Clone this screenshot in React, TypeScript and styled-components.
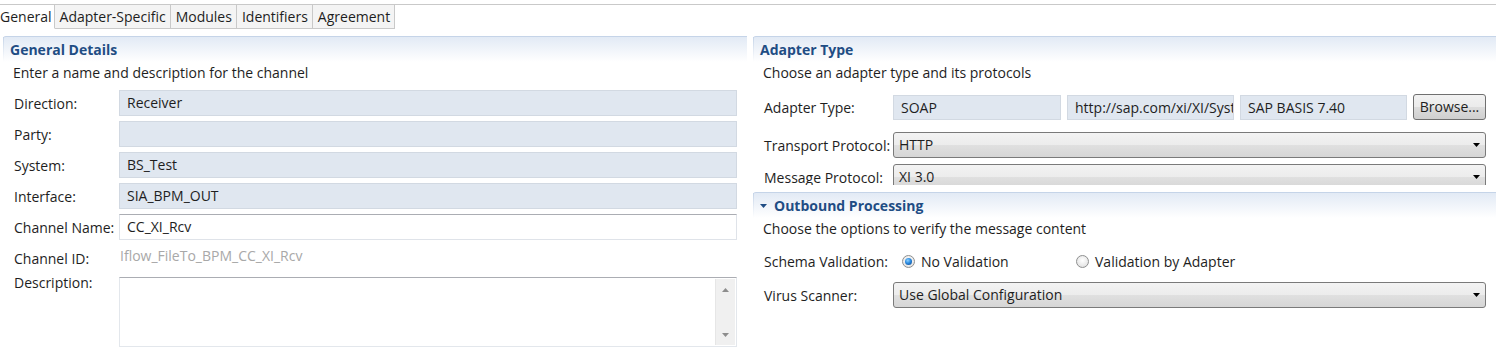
import styled, { createGlobalStyle } from "styled-components"

const GlobalStyle = createGlobalStyle`
  html, body {
    margin: 0;
    padding: 0;
    background: #fff;
  }
  body {
    font-family: "Open Sans", "Noto Sans", sans-serif;
    font-size: 14px;
    color: #1e1e1e;
    overflow: hidden;
  }
`

const Page = styled.div`
  width: 1496px;
  height: 358px;
  overflow: hidden;
`

const TabBar = styled.div`
  display: flex;
  margin-top: 4px;
  border-top: 1px solid #c9c9c9;
  height: 24px;
`

const Tab = styled.div<{ $active?: boolean }>`
  padding: 0 4px 0 5px;
  line-height: 23px;
  border-right: 1px solid #c9c9c9;
  border-bottom: 1px solid ${(p) => (p.$active ? "transparent" : "#c9c9c9")};
  background: ${(p) => (p.$active ? "#fff" : "#f4f4f4")};
  white-space: nowrap;

  &:first-child {
    padding: 0 2px 0 0;
  }
`

const TabFiller = styled.div`
  flex: 1;
`

const Columns = styled.div`
  display: flex;
  gap: 6px;
  padding: 7px 0 0 3px;
`

const Column = styled.div<{ $width: number }>`
  width: ${(p) => p.$width}px;
  flex-shrink: 0;
  display: flex;
  flex-direction: column;
  gap: 7px;
`

const Section = styled.section<{ $height?: number }>`
  display: flex;
  flex-direction: column;
  ${(p) => (p.$height ? `height: ${p.$height}px; overflow: hidden; flex-shrink: 0;` : "")}

  & > * {
    flex-shrink: 0;
  }
`

const SectionHeader = styled.div`
  position: relative;
  height: 25px;
  border-top: 1px solid #c5d4e8;
  border-top-left-radius: 3px;
  background: linear-gradient(#e2eaf5, #ffffff);
  padding-left: 7px;
  display: flex;
  align-items: center;
  gap: 7px;
  font-weight: 700;
  color: #1f4d84;

  &::before {
    content: "";
    position: absolute;
    left: 0;
    top: 0;
    bottom: 0;
    width: 1px;
    background: linear-gradient(#c5d4e8, #ffffff);
  }
`

const Caret = styled.svg`
  width: 7px;
  height: 4px;
  fill: #1f4d84;
`

const Hint = styled.div`
  margin-top: 2px;
  padding-left: 10px;
  line-height: 18px;
`

const FieldRow = styled.div<{ $label: number; $mt: number }>`
  display: grid;
  grid-template-columns: ${(p) => p.$label}px 1fr;
  align-items: center;
  margin-top: ${(p) => p.$mt}px;
  padding: 0 10px 0 11px;
`

const Label = styled.div<{ $top?: boolean }>`
  white-space: nowrap;
  ${(p) => (p.$top ? "align-self: start; margin-top: -3px; line-height: 18px;" : "")}
`

const ReadField = styled.div`
  box-sizing: border-box;
  height: 26px;
  padding: 0 7px;
  line-height: 24px;
  background: #e0e7f0;
  border: 1px solid #d2d9e2;
  white-space: nowrap;
  overflow: hidden;
`

const SmallField = styled(ReadField)`
  height: 25px;
  line-height: 23px;
`

const TextBox = styled.div`
  box-sizing: border-box;
  height: 26px;
  padding: 0 7px;
  line-height: 24px;
  background: #fff;
  border: 1px solid #dfe3e9;
  border-top-color: #abadb3;
`

const PlainValue = styled.div`
  padding-left: 1px;
  line-height: 22px;
  padding-bottom: 5px;
  color: #a8a8a8;
`

const TextArea = styled.div`
  box-sizing: border-box;
  height: 70px;
  background: #fff;
  border: 1px solid #e3e7ec;
  border-top-color: #abadb3;
  display: flex;
  justify-content: flex-end;
  padding: 1px;
`

const ScrollTrack = styled.div`
  width: 19px;
  background: #f0f0f0;
  border-left: 1px solid #e6e6e6;
  display: flex;
  flex-direction: column;
  justify-content: space-between;
  align-items: center;
  padding: 9px 0 8px;
`

const ScrollArrow = styled.svg`
  width: 7px;
  height: 4px;
  fill: #8d8d8d;
`

const AdapterFields = styled.div`
  display: grid;
  grid-template-columns: 168px 167px 167px 73px;
  column-gap: 6px;
  align-items: center;
`

const Button = styled.div`
  box-sizing: border-box;
  height: 26px;
  border: 1px solid #707070;
  border-radius: 3px;
  background: linear-gradient(#f2f2f2 0%, #ebebeb 50%, #dddddd 50%, #cfcfcf 100%);
  text-align: center;
  line-height: 24px;
`

const Select = styled.div`
  box-sizing: border-box;
  height: 26px;
  border: 1px solid #7a7a7a;
  border-radius: 3px;
  background: linear-gradient(#f3f3f3 0%, #ececec 50%, #e0e0e0 50%, #d6d6d6 100%);
  display: flex;
  align-items: center;
  justify-content: space-between;
  padding: 0 5px 0 5px;
  line-height: 24px;
`

const SelectArrow = styled.svg`
  width: 7px;
  height: 4px;
  fill: #000;
`

const RadioGroup = styled.div`
  display: flex;
  align-items: center;
  height: 22px;
  padding-left: 9px;
`

const RadioOption = styled.div<{ $width?: number }>`
  display: flex;
  align-items: center;
  gap: 6px;
  ${(p) => (p.$width ? `width: ${p.$width}px;` : "")}
`

const RadioDot = styled.span<{ $checked?: boolean }>`
  box-sizing: border-box;
  width: 13px;
  height: 13px;
  border-radius: 50%;
  border: 1px solid #8e8f8f;
  background: radial-gradient(circle at 50% 40%, #ffffff 0%, #e6e6e6 70%, #d0d0d0 100%);
  display: flex;
  align-items: center;
  justify-content: center;

  &::after {
    content: "";
    display: ${(p) => (p.$checked ? "block" : "none")};
    width: 7px;
    height: 7px;
    border-radius: 50%;
    background: radial-gradient(circle at 40% 35%, #8fd2ff 0%, #2a8ae0 45%, #0b3f82 100%);
  }
`

const Arrow = ({ up }: { up?: boolean }) => (
  <ScrollArrow viewBox="0 0 7 4">
    <polygon points={up ? "3.5,0 7,4 0,4" : "0,0 7,0 3.5,4"} />
  </ScrollArrow>
)

const Dropdown = ({ value }: { value: string }) => (
  <Select>
    <span>{value}</span>
    <SelectArrow viewBox="0 0 7 4">
      <polygon points="0,0 7,0 3.5,4" />
    </SelectArrow>
  </Select>
)

const tabs = ["General", "Adapter-Specific", "Modules", "Identifiers", "Agreement"]

const readRows = [
  { label: "Direction:", value: "Receiver" },
  { label: "Party:", value: "" },
  { label: "System:", value: "BS_Test" },
  { label: "Interface:", value: "SIA_BPM_OUT" },
]

export default function App() {
  return (
    <Page>
      <GlobalStyle />
      <TabBar>
        {tabs.map((t, i) => (
          <Tab key={t} $active={i === 0}>
            {t}
          </Tab>
        ))}
        <TabFiller />
      </TabBar>

      <Columns>
        <Column $width={744}>
          <Section>
            <SectionHeader>General Details</SectionHeader>
            <Hint>Enter a name and description for the channel</Hint>
            {readRows.map((r, i) => (
              <FieldRow key={r.label} $label={105} $mt={i === 0 ? 8 : 5}>
                <Label>{r.label}</Label>
                <ReadField>{r.value}</ReadField>
              </FieldRow>
            ))}
            <FieldRow $label={105} $mt={5}>
              <Label>Channel Name:</Label>
              <TextBox>CC_XI_Rcv</TextBox>
            </FieldRow>
            <FieldRow $label={105} $mt={5}>
              <Label>Channel ID:</Label>
              <PlainValue>Iflow_FileTo_BPM_CC_XI_Rcv</PlainValue>
            </FieldRow>
            <FieldRow $label={105} $mt={5}>
              <Label $top>Description:</Label>
              <TextArea>
                <ScrollTrack>
                  <Arrow up />
                  <Arrow />
                </ScrollTrack>
              </TextArea>
            </FieldRow>
          </Section>
        </Column>

        <Column $width={743}>
          <Section $height={149}>
            <SectionHeader>Adapter Type</SectionHeader>
            <Hint>Choose an adapter type and its protocols</Hint>
            <FieldRow $label={129} $mt={12}>
              <Label>Adapter Type:</Label>
              <AdapterFields>
                <SmallField>SOAP</SmallField>
                <SmallField>http://sap.com/xi/XI/System</SmallField>
                <SmallField>SAP BASIS 7.40</SmallField>
                <Button>Browse...</Button>
              </AdapterFields>
            </FieldRow>
            <FieldRow $label={129} $mt={12}>
              <Label>Transport Protocol:</Label>
              <Dropdown value="HTTP" />
            </FieldRow>
            <FieldRow $label={129} $mt={6}>
              <Label>Message Protocol:</Label>
              <Dropdown value="XI 3.0" />
            </FieldRow>
          </Section>

          <Section>
            <SectionHeader>
              <Caret viewBox="0 0 7 4">
                <polygon points="0,0 7,0 3.5,4" />
              </Caret>
              Outbound Processing
            </SectionHeader>
            <Hint>Choose the options to verify the message content</Hint>
            <FieldRow $label={129} $mt={12}>
              <Label>Schema Validation:</Label>
              <RadioGroup>
                <RadioOption $width={174}>
                  <RadioDot $checked />
                  No Validation
                </RadioOption>
                <RadioOption>
                  <RadioDot />
                  Validation by Adapter
                </RadioOption>
              </RadioGroup>
            </FieldRow>
            <FieldRow $label={129} $mt={10}>
              <Label>Virus Scanner:</Label>
              <Dropdown value="Use Global Configuration" />
            </FieldRow>
          </Section>
        </Column>
      </Columns>
    </Page>
  )
}
